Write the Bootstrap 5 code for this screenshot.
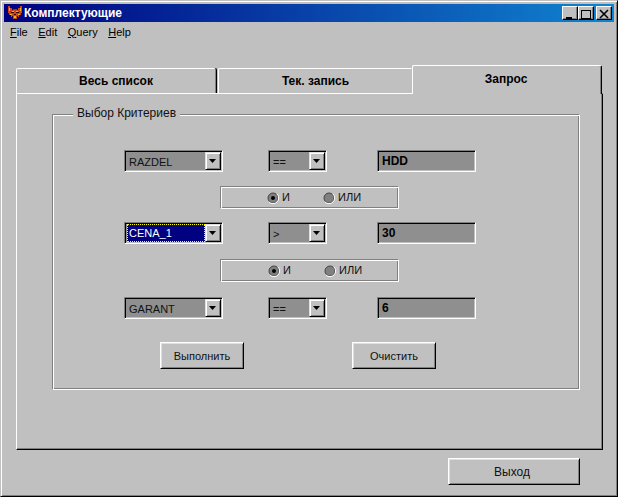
<!DOCTYPE html>
<html lang="ru"><head><meta charset="utf-8"><title>Комплектующие</title>
<link href="https://cdn.jsdelivr.net/npm/bootstrap@5.3.0/dist/css/bootstrap.min.css" rel="stylesheet">
<style>
html,body{margin:0;background:#c0c0c0;overflow:hidden}
body{font:11px/13px "Liberation Sans",Arial,sans-serif;color:#000}
.wnd{width:618px;height:497px;background:#c0c0c0;border:1px solid;border-color:#c0c0c0 #000 #000 #c0c0c0;box-shadow:inset 1px 1px 0 #fff,inset -1px -1px 0 #808080;padding:3px}
.ttl{height:18px;background:linear-gradient(90deg,#000080,#1084d0);color:#fff;font-weight:700;font-size:12px;padding:0 2px 0 3px}
.ttl-txt{margin-left:1px}
.cap{width:16px;height:14px;background:#c0c0c0;border:1px solid;border-color:#fff #000 #000 #fff;box-shadow:inset -1px -1px 0 #808080;padding:0}
.cap svg{display:block;margin:1px 0 0 1px}
.cap-last{margin-left:2px}
.mnu{height:20px;padding-left:6px;gap:10.5px;font-size:11px;color:#000}
.mnu-i{color:inherit;text-decoration:none}
.mnu-i u{text-underline-offset:1px}
.strip{margin:23px 0 0 12px;width:587px;height:28px}
.tb{height:25px;background:#c0c0c0;border:solid;border-width:1px 1px 0 1px;border-color:#fff #808080 #fff #fff;border-radius:2px 2px 0 0;font-weight:700;font-size:12px;box-shadow:1px 0 0 #000;color:#000}
.tb-1{width:200px}.tb-2{width:195px;margin-left:2px}
.tb-3{width:190px;height:29px;margin-left:-1px;padding:0 2px 2px 0;border-color:#fff #000 #c0c0c0 #fff;border-right:1px solid #000;box-shadow:inset -1px 0 0 #808080;position:relative;z-index:2;margin-bottom:-1px}
.pnl{margin-left:12px;width:587px;height:357px;border:1px solid;border-color:#fff #000 #000 #fff;box-shadow:inset -1px -1px 0 #808080;padding:20px 0 0 35px}
.grp{position:relative;width:528px;height:276px;border:1px solid #808080;border-right-color:#fff;border-bottom-color:#fff;box-shadow:inset 1px 1px 0 #fff,inset -1px -1px 0 #808080;padding:35px 0 0 71px}
.grp-t{position:absolute;left:20px;top:-8px;background:#c0c0c0;padding:0 4px;color:#111;font-size:12px}
.fld{height:22px;background:#8f8f8f;border:1px solid;border-color:#808080 #fff #fff #808080;box-shadow:inset 1px 1px 0 #000,inset -1px -1px 0 #c0c0c0;padding:1px 1px 1px 2px;color:#111}
.fld-l{width:99px}.fld-s{width:59px;margin-left:45px}.fld-e{width:99px;margin-left:50px;padding:2px 1px 1px 4px;font-weight:700;color:#000;font-size:12px}
.val{padding:2px 0 0 2px;align-self:stretch;display:flex;align-items:center}
.val-sel{padding-top:1px;background:#000080;color:#fff;outline:1px dotted #ff0;outline-offset:-1px}
.arw{width:16px;height:18px;background:#c0c0c0;border:1px solid;border-color:#dfdfdf #000 #000 #dfdfdf;box-shadow:inset 1px 1px 0 #fff,inset -1px -1px 0 #808080;flex:none;margin-left:auto}
.arw svg{display:block}
.rad{width:179px;height:23px;margin:14px 0 13px 96px;border:1px solid;border-color:#808080 #fff #fff #808080;box-shadow:inset 1px 1px 0 #fff,inset -1px -1px 0 #808080;padding-left:46px;color:#111}
.rad-b{margin-top:15px;margin-bottom:15px;padding-left:47px}
.rad-i{width:56px}
.rad-i svg{margin-right:3px;flex:none}
.act{margin:23px 0 0 36px}
.wbtn{height:27px;width:84px;background:#c0c0c0;border:1px solid;border-color:#fff #000 #000 #fff;box-shadow:inset 1px 1px 0 #dfdfdf,inset -1px -1px 0 #808080;color:#111;font-size:11px;padding:1px 0 0;border-radius:0}
.wbtn:hover,.wbtn:active{background:#c0c0c0;color:#111;border-color:#fff #000 #000 #fff}
.wbtn-g{margin-left:108px}
.foot{margin:8px 0 0 444px}
.wbtn-x{width:132px;font-size:12px;padding:0 4px 0 0}
</style></head><body>
<div class="wnd d-flex flex-column">
 <div class="ttl d-flex align-items-center">
  <svg width="16" height="16" viewBox="0 0 16 16" shape-rendering="crispEdges"><path fill="#c8481c" d="M1 1h2v2h2v2h6V3h2V1h2v7h-1v2h-2v2h-2v2H6v-2H4v-2H2V8H1z"/><path fill="#f0b020" d="M2 3h1v3H2zM13 3h1v3h-1zM5 6h2v1H5zM9 6h2v1H9zM3 9h2v1H3zM11 9h2v1h-2zM7 11h2v2H7z"/><path fill="#300" d="M4 7h3v1H4zM9 7h3v1H9zM7 9h2v1H7zM5 11h1v1H5zM10 11h1v1h-1z"/><path fill="#e01000" d="M6 4h4v1H6zM3 6h1v1H3zM12 6h1v1h-1z"/></svg>
  <span class="ttl-txt flex-grow-1">Комплектующие</span>
  <button class="cap" type="button" aria-label="min"><svg width="12" height="10"><rect x="2" y="8" width="6" height="2"/></svg></button>
  <button class="cap" type="button" aria-label="max"><svg width="12" height="10" fill="none"><rect x="1.5" y="1.5" width="9" height="8" stroke="#000"/><rect x="1" y="1" width="10" height="1"/></svg></button>
  <button class="cap cap-last" type="button" aria-label="close"><svg width="12" height="10"><path d="M2 1l8 8M10 1l-8 8" stroke="#000" stroke-width="1.6"/></svg></button>
 </div>
 <div class="mnu d-flex align-items-center">
  <a class="mnu-i" href="#"><u>F</u>ile</a><a class="mnu-i" href="#"><u>E</u>dit</a><a class="mnu-i" href="#"><u>Q</u>uery</a><a class="mnu-i" href="#"><u>H</u>elp</a>
 </div>
 <div class="strip d-flex align-items-end">
  <div class="tb tb-1 d-flex align-items-center justify-content-center">Весь список</div>
  <div class="tb tb-2 d-flex align-items-center justify-content-center">Тек. запись</div>
  <div class="tb tb-3 d-flex align-items-center justify-content-center">Запрос</div>
 </div>
 <div class="pnl">
  <div class="grp">
   <span class="grp-t">Выбор Критериев</span>
   <div class="d-flex">
    <div class="fld fld-l d-flex align-items-center"><span class="val flex-grow-1">RAZDEL</span><span class="arw"><svg width="14" height="16"><path d="M3 6h7l-3.5 4z"/></svg></span></div>
    <div class="fld fld-s d-flex align-items-center"><span class="val flex-grow-1">==</span><span class="arw"><svg width="14" height="16"><path d="M3 6h7l-3.5 4z"/></svg></span></div>
    <div class="fld fld-e d-flex align-items-center">HDD</div>
   </div>
   <div class="rad d-flex align-items-center">
    <span class="rad-i d-flex align-items-center"><svg width="12" height="12"><circle cx="6" cy="6" r="5" fill="#808080" stroke="#444"/><path d="M10 2a5.5 5.5 0 0 1-8 8" fill="none" stroke="#fff"/><circle cx="6" cy="6" r="2"/></svg>И</span>
    <span class="rad-i d-flex align-items-center"><svg width="12" height="12"><circle cx="6" cy="6" r="5" fill="#808080" stroke="#444"/><path d="M10 2a5.5 5.5 0 0 1-8 8" fill="none" stroke="#fff"/></svg>ИЛИ</span>
   </div>
   <div class="d-flex">
    <div class="fld fld-l d-flex align-items-center"><span class="val val-sel flex-grow-1">CENA_1</span><span class="arw"><svg width="14" height="16"><path d="M3 6h7l-3.5 4z"/></svg></span></div>
    <div class="fld fld-s d-flex align-items-center"><span class="val flex-grow-1">&gt;</span><span class="arw"><svg width="14" height="16"><path d="M3 6h7l-3.5 4z"/></svg></span></div>
    <div class="fld fld-e d-flex align-items-center">30</div>
   </div>
   <div class="rad rad-b d-flex align-items-center">
    <span class="rad-i d-flex align-items-center"><svg width="12" height="12"><circle cx="6" cy="6" r="5" fill="#808080" stroke="#444"/><path d="M10 2a5.5 5.5 0 0 1-8 8" fill="none" stroke="#fff"/><circle cx="6" cy="6" r="2"/></svg>И</span>
    <span class="rad-i d-flex align-items-center"><svg width="12" height="12"><circle cx="6" cy="6" r="5" fill="#808080" stroke="#444"/><path d="M10 2a5.5 5.5 0 0 1-8 8" fill="none" stroke="#fff"/></svg>ИЛИ</span>
   </div>
   <div class="d-flex">
    <div class="fld fld-l d-flex align-items-center"><span class="val flex-grow-1">GARANT</span><span class="arw"><svg width="14" height="16"><path d="M3 6h7l-3.5 4z"/></svg></span></div>
    <div class="fld fld-s d-flex align-items-center"><span class="val flex-grow-1">==</span><span class="arw"><svg width="14" height="16"><path d="M3 6h7l-3.5 4z"/></svg></span></div>
    <div class="fld fld-e d-flex align-items-center">6</div>
   </div>
   <div class="act d-flex">
    <button class="btn wbtn" type="button">Выполнить</button>
    <button class="btn wbtn wbtn-g" type="button">Очистить</button>
   </div>
  </div>
 </div>
 <div class="foot"><button class="btn wbtn wbtn-x" type="button">Выход</button></div>
</div>
</body></html>
